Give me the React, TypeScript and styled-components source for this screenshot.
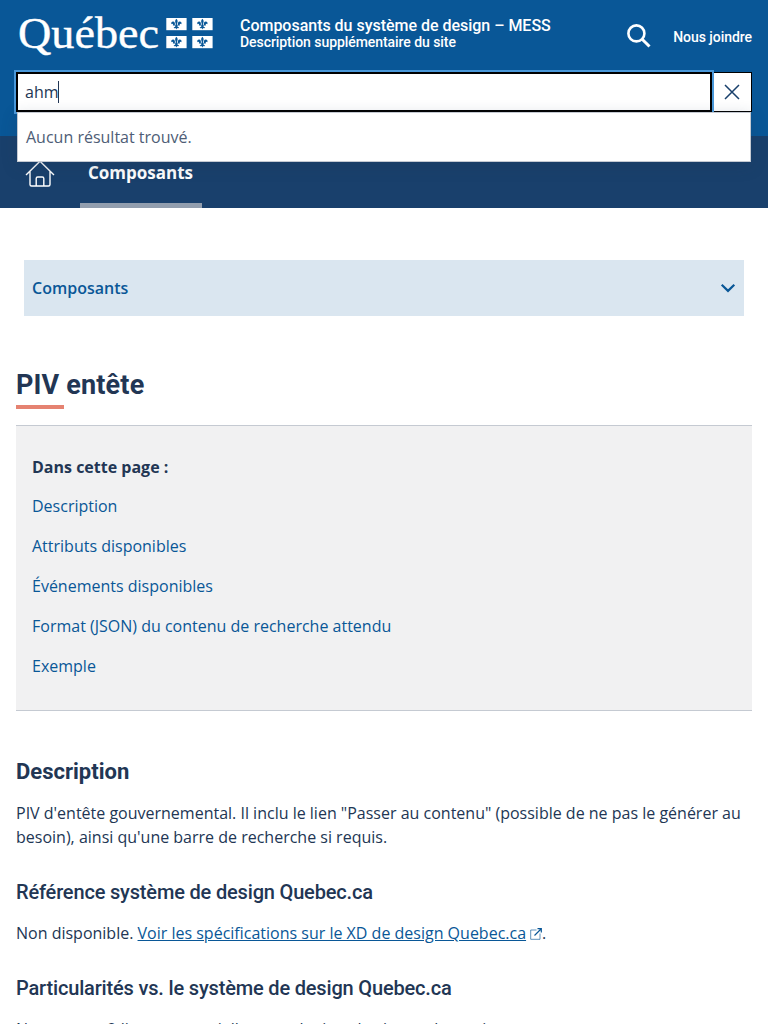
import React from "react";
import styled, { createGlobalStyle } from "styled-components";

const Global = createGlobalStyle`
  *, *::before, *::after { box-sizing: border-box; }
  body { margin: 0; background: #fff; color: #223654; font: 400 16px/24px "Open Sans", sans-serif; overflow: hidden; }
  #root { height: 1024px; overflow: hidden; }
`;

const Banner = styled.header`
  height: 136px;
  background: #095797;
  position: relative;
  z-index: 1;
`;
const BannerTop = styled.div`
  display: flex;
  height: 72px;
  padding: 0 16px;
`;
const Logo = styled.svg`
  display: block;
  width: 224px;
  height: 72px;
  flex: none;
`;
const SiteTitle = styled.div`
  flex: 1;
  padding-top: 17px;
  color: #fff;
  font-family: Roboto, sans-serif;
  font-weight: 500;
`;
const SiteName = styled.div`
  font-size: 16px;
  line-height: 18px;
  letter-spacing: -0.02px;
`;
const SiteDescription = styled.div`
  font-size: 14px;
  line-height: 15px;
  letter-spacing: -0.06px;
`;
const SearchIcon = styled.svg`
  display: block;
  width: 24px;
  height: 24px;
  margin: 24px 22px 0 0;
`;
const ContactLink = styled.a`
  color: #fff;
  font: 500 14px/16px Roboto, sans-serif;
  letter-spacing: -0.05px;
  padding-top: 29px;
`;
const SearchBar = styled.div`
  display: flex;
  height: 40px;
  margin: 0 16px;
`;
const SearchField = styled.div`
  display: flex;
  align-items: center;
  width: 696px;
  border: 2px solid #000;
  outline: 2px solid #4a98d9;
  background: #fff;
  padding: 0 7px;
`;
const Caret = styled.span`
  width: 1px;
  height: 22px;
  margin-left: -1px;
  background: #223654;
`;
const CloseButton = styled.button`
  display: flex;
  align-items: center;
  justify-content: center;
  flex: 1;
  margin-left: 2px;
  padding: 0 1px 0 0;
  border: 1px solid #000;
  border-left: 0;
  background: #fff;
`;
const Results = styled.div`
  position: absolute;
  left: 17px;
  top: 112px;
  width: 734px;
  height: 50px;
  padding: 12px 8px;
  border: 1px solid #c5cad2;
  background: #fff;
  color: #4e5d76;
  box-shadow: 0 4px 16px rgba(34, 54, 84, 0.24);
`;
const Nav = styled.nav`
  display: flex;
  height: 72px;
  padding-left: 24px;
  background: #19406c;
`;
const HomeIcon = styled.svg`
  display: block;
  width: 32px;
  height: 30px;
  margin: 22px 24px 0 0;
`;
const NavItem = styled.a`
  width: 122px;
  padding: 25px 8px 0;
  border-bottom: 5px solid #929eae;
  color: #fff;
  font-size: 17px;
  font-weight: 700;
`;
const SideMenu = styled.div`
  display: flex;
  align-items: center;
  justify-content: space-between;
  height: 56px;
  margin: 52px 24px 0;
  padding: 0 8px;
  background: #dae6f0;
  color: #095797;
  font-weight: 600;
`;
const Main = styled.main`
  padding: 0 16px;
`;
const PageTitle = styled.h1`
  margin: 53px 0 0;
  font: 700 27px/32px Roboto, sans-serif;
  letter-spacing: 0.16px;
  &::after {
    content: "";
    display: block;
    width: 48px;
    height: 4px;
    margin-top: 4px;
    background: #e58271;
  }
`;
const Contents = styled.section`
  height: 286px;
  margin-top: 16px;
  padding: 29px 16px 0;
  border: solid #c5cad2;
  border-width: 1px 0;
  background: #f1f1f2;
`;
const ContentsTitle = styled.div`
  font-weight: 700;
  margin-bottom: 15px;
`;
const ContentsLink = styled.a`
  display: block;
  color: #095797;
  margin-bottom: 16px;
`;
const Heading2 = styled.h2`
  margin: 47px 0 15px;
  font: 700 22px/28px Roboto, sans-serif;
`;
const Heading3 = styled.h3`
  margin: 31px 0 17px;
  font: 500 20px/24px Roboto, sans-serif;
  letter-spacing: -0.17px;
`;
const Text = styled.p`
  margin: 0;
`;
const Link = styled.a`
  color: #095797;
  text-decoration: underline;
`;
const ExternalIcon = styled.svg`
  margin-left: 4px;
  vertical-align: -1px;
`;

const flags = [
  [166.3, 18],
  [192.3, 18],
  [166.3, 36],
  [192.3, 36],
];

function QuebecLogo() {
  return (
    <Logo viewBox="16 0 224 72" fill="#fff">
      <text x="18" y="48" fontFamily="Liberation Serif" fontSize="45" textLength="141" lengthAdjust="spacingAndGlyphs" stroke="#fff" strokeWidth=".4">
        Québec
      </text>
      {flags.map(([x, y]) => (
        <g key={`${x}-${y}`} transform={`translate(${x} ${y})`}>
          <rect width="20.3" height="12.2" />
          <path
            fill="#095797"
            d="M10.1 .8C8.8 2.2 8.5 3.5 9.3 5.2L9.6 6.8H8.5C8.9 5 8.3 3.6 6.8 3.6C5.3 3.6 4.5 5 5.2 6.3C5.6 5.5 6.6 5.5 6.8 6.4C6.9 7 6.6 7.3 6.3 7.6H9.2C9 9 8.2 9.5 7.4 9C7.5 10.2 8.6 10.6 9.4 9.9L10.1 11.6L10.8 9.9C11.6 10.6 12.7 10.2 12.8 9C12 9.5 11.2 9 11 7.6H13.9C13.6 7.3 13.3 7 13.4 6.4C13.6 5.5 14.6 5.5 15 6.3C15.7 5 14.9 3.6 13.4 3.6C11.9 3.6 11.3 5 11.7 6.8H10.6L10.9 5.2C11.7 3.5 11.4 2.2 10.1 .8Z"
          />
        </g>
      ))}
    </Logo>
  );
}

const sections = [
  "Description",
  "Attributs disponibles",
  "Événements disponibles",
  "Format (JSON) du contenu de recherche attendu",
  "Exemple",
];

export default function App() {
  return (
    <>
      <Global />
      <Banner>
        <BannerTop>
          <QuebecLogo />
          <SiteTitle>
            <SiteName>Composants du système de design – MESS</SiteName>
            <SiteDescription>Description supplémentaire du site</SiteDescription>
          </SiteTitle>
          <SearchIcon viewBox="0 0 24 24" fill="none" stroke="#fff">
            <circle cx="9.4" cy="9.4" r="8" strokeWidth="2.6" />
            <path d="M15.2 15.2L22.5 22.5" strokeWidth="3" />
          </SearchIcon>
          <ContactLink>Nous joindre</ContactLink>
        </BannerTop>
        <SearchBar>
          <SearchField>
            ahm
            <Caret />
          </SearchField>
          <CloseButton aria-label="Fermer">
            <svg width="16" height="16" viewBox="0 0 16 16" stroke="#19406c" strokeWidth="1.5">
              <path d="M1 1L15 15M15 1L1 15" />
            </svg>
          </CloseButton>
        </SearchBar>
        <Results>Aucun résultat trouvé.</Results>
      </Banner>
      <Nav>
        <HomeIcon viewBox="0 0 32 30" fill="none" stroke="#fff" strokeWidth="1.4">
          <path d="M2 17L16 3.2L30 17M6 13.5V26.5Q6 28 7.5 28H24.5Q26 28 26 26.5V13.5M12.2 28V20.5Q12.2 19 13.7 19H18.3Q19.8 19 19.8 20.5V28" />
        </HomeIcon>
        <NavItem>Composants</NavItem>
      </Nav>
      <SideMenu>
        Composants
        <svg width="16" height="16" viewBox="0 0 16 16" fill="none" stroke="#095797" strokeWidth="2.2">
          <path d="M1.7 4.8L8 10.9L14.3 4.8" />
        </svg>
      </SideMenu>
      <Main>
        <PageTitle>PIV entête</PageTitle>
        <Contents>
          <ContentsTitle>Dans cette page :</ContentsTitle>
          {sections.map((s) => (
            <ContentsLink key={s}>{s}</ContentsLink>
          ))}
        </Contents>
        <Heading2>Description</Heading2>
        <Text>
          PIV d'entête gouvernemental. Il inclu le lien "Passer au contenu" (possible de ne pas le générer au besoin), ainsi
          qu'une barre de recherche si requis.
        </Text>
        <Heading3>Référence système de design Quebec.ca</Heading3>
        <Text>
          Non disponible. <Link>Voir les spécifications sur le XD de design Quebec.ca</Link>
          <ExternalIcon width="12" height="12" viewBox="0 0 12 12" fill="none" stroke="#095797">
            <path d="M6.5 2H.7V11.3H10V5.5" strokeOpacity=".65" />
            <path d="M4.5 7.5L11 1M7.5.7H11.3V4.5" strokeWidth="1.2" />
          </ExternalIcon>
          .
        </Text>
        <Heading3>Particularités vs. le système de design Quebec.ca</Heading3>
        <Text>Nous avons 2 lignes potentielles pour le titre du site sur la version.</Text>
      </Main>
    </>
  );
}
